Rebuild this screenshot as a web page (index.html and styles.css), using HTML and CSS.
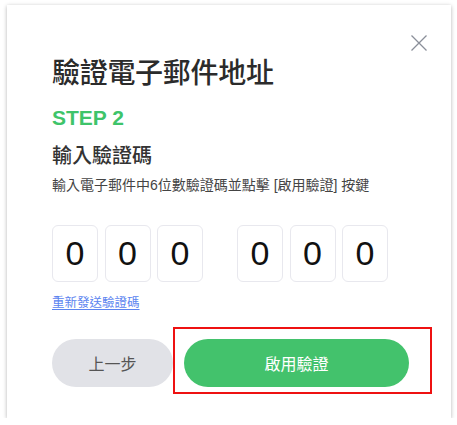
FILE: index.html
```html
<!DOCTYPE html>
<html lang="zh-Hant">
<head>
<meta charset="utf-8">
<link rel="stylesheet" href="styles.css">
</head>
<body>
<div class="card">
  <button class="close" aria-label="close">
    <svg width="16" height="16" viewBox="0 0 16 16"><path d="M0.5 0.5 L15.5 15.5 M15.5 0.5 L0.5 15.5" stroke="#8a8f99" stroke-width="1.3" fill="none"/></svg>
  </button>
  <h1 class="title">驗證電子郵件地址</h1>
  <div class="step">STEP 2</div>
  <h2 class="subtitle">輸入驗證碼</h2>
  <p class="desc">輸入電子郵件中6位數驗證碼並點擊 [啟用驗證] 按鍵</p>
  <div class="code">
    <div class="group">
      <div class="digit">0</div>
      <div class="digit">0</div>
      <div class="digit">0</div>
    </div>
    <div class="group">
      <div class="digit">0</div>
      <div class="digit">0</div>
      <div class="digit">0</div>
    </div>
  </div>
  <a class="resend" href="#">重新發送驗證碼</a>
  <div class="actions">
    <button class="btn back">上一步</button>
    <button class="btn primary">啟用驗證</button>
    <div class="highlight"></div>
  </div>
</div>
</body>
</html>
```

FILE: styles.css
```css
html, body {
  margin: 0;
  padding: 0;
  background: #fff;
}
body {
  font-family: "Liberation Sans", "Noto Sans CJK TC", sans-serif;
  color: #222;
}
.card {
  position: relative;
  box-sizing: border-box;
  margin: 5px 0 0 7px;
  width: 444px;
  height: 413px;
  background: #fff;
  box-shadow: 0 1px 4px rgba(0,0,0,0.3);
  padding: 47px 45px 0 45px;
  display: flex;
  flex-direction: column;
  align-items: flex-start;
}
.close {
  position: absolute;
  top: 30px;
  right: 24px;
  width: 16px;
  height: 16px;
  padding: 0;
  border: 0;
  background: none;
  display: flex;
}
.title {
  margin: 0;
  font-family: "Noto Sans CJK TC", sans-serif;
  font-size: 28px;
  font-weight: 500;
  line-height: 38px;
  color: #2b2b2b;
  letter-spacing: -0.3px;
}
.step {
  margin-top: 16px;
  font-family: "Liberation Sans", sans-serif;
  font-weight: 700;
  font-size: 21px;
  line-height: 24px;
  color: #3ec46a;
}
.subtitle {
  margin: 12px 0 0 0;
  font-family: "Noto Sans CJK TC", sans-serif;
  font-size: 20px;
  font-weight: 500;
  line-height: 26px;
  color: #333;
}
.desc {
  margin: 7px 0 0 0;
  font-family: "Liberation Sans", "Noto Sans CJK TC", sans-serif;
  font-size: 14px;
  line-height: 20px;
  color: #444;
}
.code {
  margin-top: 30px;
  display: flex;
  gap: 34px;
}
.group {
  display: flex;
  gap: 6.5px;
}
.digit {
  box-sizing: border-box;
  width: 46px;
  height: 57px;
  border: 1px solid #e8e8ee;
  border-radius: 6px;
  display: flex;
  align-items: center;
  justify-content: center;
  font-family: "Liberation Sans", sans-serif;
  font-size: 34px;
  color: #111;
}
.resend {
  margin-top: 11px;
  font-family: "Noto Sans CJK TC", sans-serif;
  font-size: 12.5px;
  line-height: 18px;
  color: #5b84f0;
  text-decoration: underline;
  text-underline-offset: 2px;
}
.actions {
  position: relative;
  margin-top: 28px;
  display: flex;
  gap: 11px;
}
.btn {
  height: 48px;
  border: 0;
  border-radius: 24px;
  font-family: "Noto Sans CJK TC", sans-serif;
  font-size: 16px;
  padding: 0;
}
.back {
  width: 121px;
  background: #e1e2e7;
  color: #555;
}
.primary {
  width: 225px;
  background: #43c26c;
  color: #fff;
}
.highlight {
  position: absolute;
  left: 121px;
  top: -12px;
  width: 259px;
  height: 67px;
  box-sizing: border-box;
  border: 2px solid #ee1111;
  pointer-events: none;
}
```
